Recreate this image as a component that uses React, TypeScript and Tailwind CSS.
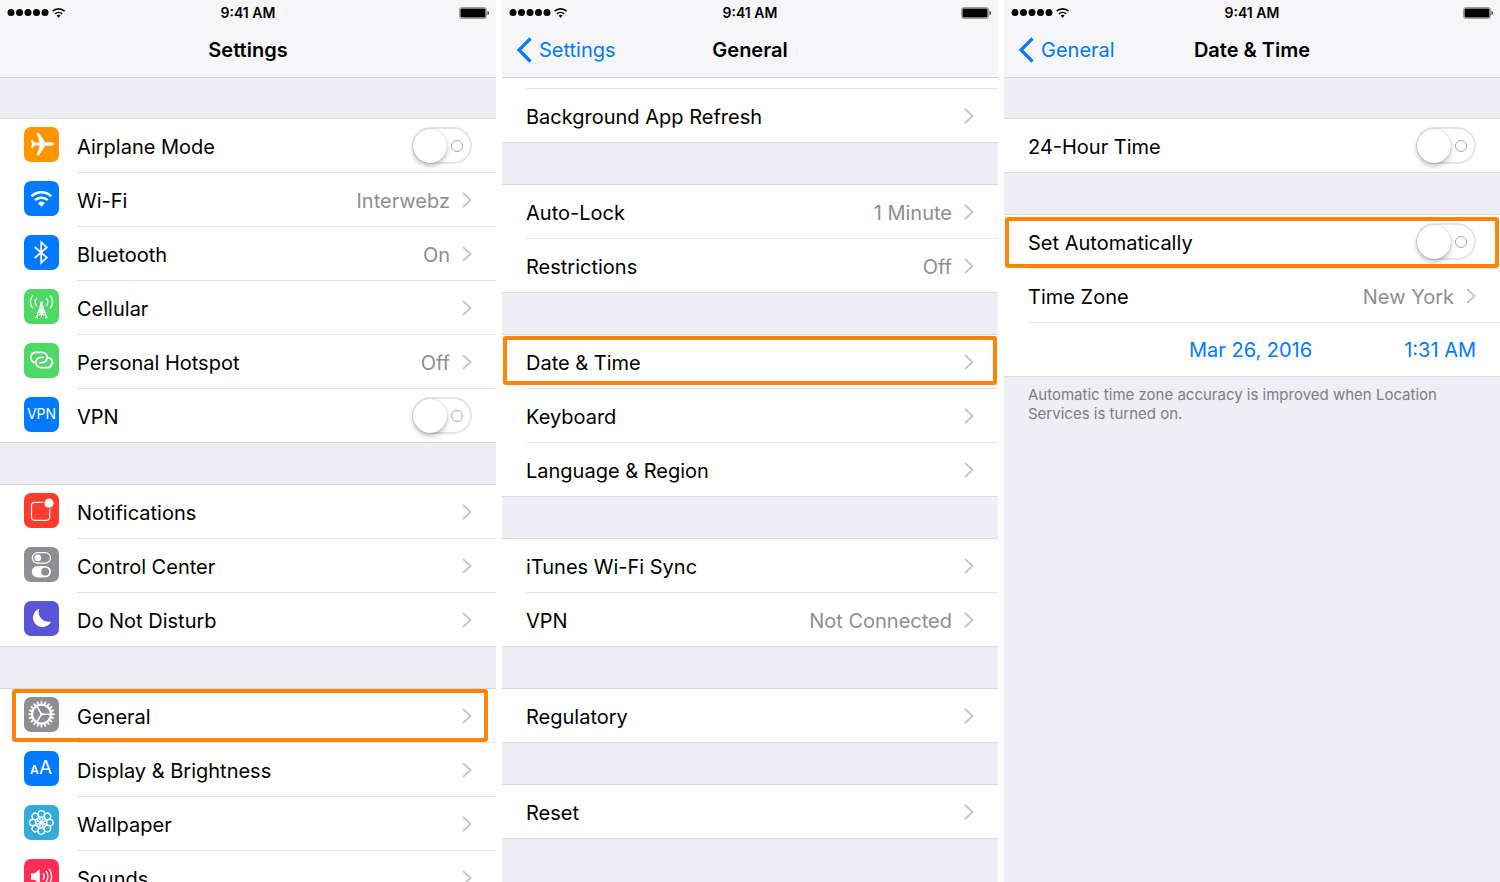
import { useId, type ReactNode } from 'react'

interface IconProps {
  color: string
  children: ReactNode
}

interface RowProps {
  label: string
  icon?: ReactNode
  value?: string
  highlight?: string
}

/* App icons, 35x35 */
function AppIcon({ color, children }: IconProps) {
  return (
    <svg viewBox="0 0 35 35" className="mb-1 mr-[18px] h-[35px] w-[35px] shrink-0" fill="none" stroke="#fff" aria-hidden="true">
      <rect width="35" height="35" rx="7" fill={color} stroke="none" />
      {children}
    </svg>
  )
}

const PETALS = [0, 45, 90, 135, 180, 225, 270, 315]
const TEETH = Array.from({ length: 20 }, (_, i) => i * 18)

const icons = {
  airplane: (
    <AppIcon color="#ff9500">
      <path
        d="M29.8 17c0 1.1-1.1 1.7-2.6 1.7H21.2L14.9 28.4h-2.3l3.2-9.7-5-.4L8.4 21H7l.9-4L7 13h1.4l2.4 2.7 5-.4-3.2-9.4h2.3l6.3 9.4h6c1.5 0 2.6.6 2.6 1.7Z"
        fill="#fff" stroke="none"
      />
    </AppIcon>
  ),
  wifi: (
    <AppIcon color="#007aff">
      <path d="M7.5 15.2a14.4 14.4 0 0 1 19.8 0" strokeWidth="2.6" />
      <path d="M11 19.2a9.4 9.4 0 0 1 12.8 0" strokeWidth="2.5" />
      <path d="M13.9 22.2a5.2 5.2 0 0 1 7 0l-3.5 3.6Z" fill="#fff" stroke="none" />
    </AppIcon>
  ),
  bluetooth: (
    <AppIcon color="#007aff">
      <path d="m10.8 12 12 10.6-5.6 5.2V7.2l5.6 5.2-12 10.6" strokeWidth="1.7" />
    </AppIcon>
  ),
  cellular: (
    <AppIcon color="#4cd964">
      <path d="M9 6.5a9.4 9.4 0 0 0 0 13M26 6.5a9.4 9.4 0 0 1 0 13M13 9a5.6 5.6 0 0 0-.2 8M22 9a5.6 5.6 0 0 1 .2 8" strokeWidth="1.5" opacity=".9" />
      <path d="m17.5 13.5-5.2 15.2M17.5 13.5l5.2 15.2M17.5 14v14.5M15.5 19.5h4M14.3 23h6.4M15.5 19.5l5.2 3.5 1.4 4-7.8-4M19.5 19.5 14.3 23l-1.4 4 7.8-4" strokeWidth="1.1" />
      <path d="M11 28.7h3M21 28.7h3" strokeWidth="1.2" />
      <circle cx="17.5" cy="14" r="1.5" fill="#fff" stroke="none" />
    </AppIcon>
  ),
  hotspot: (
    <AppIcon color="#4cd964">
      <g strokeWidth="1.9" strokeLinecap="round">
        <path d="M11.4 19.6a5.1 5.1 0 0 1 .9-10.2h5.8a5.1 5.1 0 0 1 0 10.2h-2.2" />
        <path d="M11.4 19.6a5.1 5.1 0 0 1 .9-10.2h5.8a5.1 5.1 0 0 1 0 10.2h-2.2" transform="rotate(180 17.5 17)" />
      </g>
    </AppIcon>
  ),
  vpn: (
    <AppIcon color="#007aff">
      <text x="17.5" y="22" textAnchor="middle" fontSize="14" fill="#fff" stroke="none">VPN</text>
    </AppIcon>
  ),
  notifications: (
    <AppIcon color="#ff3b30">
      <rect x="7.5" y="9.3" width="18.2" height="18" rx="3.2" strokeWidth="1.2" />
      <circle cx="25" cy="10.2" r="6" fill="#ff3b30" stroke="none" />
      <circle cx="25" cy="10.2" r="4.6" fill="#fff" stroke="none" />
    </AppIcon>
  ),
  control: (
    <AppIcon color="#8e8e93">
      <rect x="8.3" y="5.6" width="18.2" height="10.6" rx="5.3" strokeWidth="1.2" />
      <circle cx="13.8" cy="10.9" r="3.3" fill="#fff" stroke="none" />
      <rect x="7.8" y="19" width="19.2" height="11.4" rx="5.7" fill="#fff" stroke="none" />
      <circle cx="21.2" cy="24.7" r="3.9" fill="#8e8e93" stroke="none" />
    </AppIcon>
  ),
  moon: (
    <AppIcon color="#5856d6">
      <path d="M15.3 7.8a9.4 9.4 0 1 0 11.7 12.6A9.7 9.7 0 0 1 15.3 7.8Z" fill="#fff" stroke="none" />
    </AppIcon>
  ),
  gear: (
    <AppIcon color="#8e8e93">
      <circle cx="17.5" cy="17.2" r="9.4" strokeWidth="2" />
      {TEETH.map(a => (
        <path key={a} d="M16.6 7.2 17 4.2h1l.4 3Z" fill="#fff" strokeWidth=".5" transform={`rotate(${a} 17.5 17.2)`} />
      ))}
      <path d="M17.5 17.2h9.5M17.5 17.2l-4.8-8.3M17.5 17.2l-4.8 8.3" strokeWidth="1.5" />
      <circle cx="17.5" cy="17.2" r="1.4" fill="#fff" stroke="none" />
    </AppIcon>
  ),
  display: (
    <AppIcon color="#007aff">
      <text x="6" y="23" fontSize="12" fontWeight="600" fill="#fff" stroke="none">A</text>
      <text x="15" y="23" fontSize="19" fill="#fff" stroke="none">A</text>
    </AppIcon>
  ),
  wallpaper: (
    <AppIcon color="#34aadc">
      {PETALS.map(a => (
        <g key={a} transform={`rotate(${a} 17.3 17.5)`}>
          <circle cx="17.3" cy="8.9" r="3.2" strokeWidth="1.3" />
          <path d="M17.3 15.7c-1.7-1.6-1.9-2.4 0-3.8 1.9 1.4 1.7 2.2 0 3.8Z" strokeWidth="1" />
        </g>
      ))}
      <circle cx="17.3" cy="17.5" r="1.7" fill="#fff" stroke="none" />
    </AppIcon>
  ),
  sounds: (
    <AppIcon color="#ff2d55">
      <path d="M7 14.2h3.6l5.2-4v14.6l-5.2-4H7Z" fill="#fff" stroke="none" />
      <path d="M19 14.2a5.4 5.4 0 0 1 0 6.4M22 11.9a9 9 0 0 1 0 11M25 9.6a13 13 0 0 1 0 15.6" strokeWidth="1.4" />
    </AppIcon>
  ),
}

function Chevron() {
  return (
    <svg viewBox="0 0 10 16" className="ml-3 h-4 w-2.5 shrink-0" fill="none" stroke="#c7c7cc" strokeWidth="1.9" aria-hidden="true">
      <path d="m1 1 7.5 7L1 15" />
    </svg>
  )
}

function Highlight({ className }: { className: string }) {
  return <span className={`pointer-events-none absolute z-10 rounded-[3px] border-4 border-[#ff8408] ${className}`} />
}

/* White cell; the separator starts under the label, the last one runs the full width */
const cell = 'relative flex h-[54px] items-center bg-white pl-6 last:shadow-[inset_0_-1px_#dcdbe0]'
const inner = 'flex h-full min-w-0 grow items-center border-b border-[#e4e3e7] pr-6 group-last:border-transparent'

function LinkRow({ label, icon, value, highlight }: RowProps) {
  return (
    <li className={`group ${cell}`}>
      {icon}
      <a href="#" className={inner}>
        <span className="mt-0.5 grow truncate">{label}</span>
        {value && <span className="mt-0.5 text-[#8e8e93]">{value}</span>}
        <Chevron />
      </a>
      {highlight && <Highlight className={highlight} />}
    </li>
  )
}

function SwitchRow({ label, icon, highlight }: RowProps) {
  const id = useId()
  return (
    <li className={`group ${cell}`}>
      {icon}
      <div className={inner}>
        <label htmlFor={id} className="mt-0.5 grow truncate">{label}</label>
        <span className="relative flex h-[37px] w-[60px] shrink-0 items-center">
          <input
            id={id}
            type="checkbox"
            role="switch"
            className="peer absolute inset-0 appearance-none rounded-full border-2 border-[#e5e5e5] checked:border-[#4cd964] checked:bg-[#4cd964]"
          />
          <span className="pointer-events-none relative ml-px h-[34px] w-[34px] rounded-full bg-white shadow-[0_3px_5px_rgba(0,0,0,0.25),0_0_1px_rgba(0,0,0,0.25)] peer-checked:ml-[25px]" />
          <span className="pointer-events-none relative ml-1 h-3 w-3 rounded-full border border-[#a9a9a9] peer-checked:hidden" />
        </span>
      </div>
      {highlight && <Highlight className={highlight} />}
    </li>
  )
}

function Group({ children }: { children: ReactNode }) {
  return <ul className="mb-[41px] shrink-0 border-t border-[#d9d8dd]">{children}</ul>
}

function StatusBar() {
  return (
    <div className="grid h-[26px] grid-cols-3 items-center px-[7px] text-sm font-semibold">
      <svg viewBox="0 0 60 12" className="h-3 w-[60px]" aria-hidden="true">
        {[4, 12.5, 21, 29.5, 38].map(x => <circle key={x} cx={x} cy="5.6" r="3.5" />)}
        <g fill="none" stroke="#000" strokeWidth="1.6">
          <path d="M45.6 4.2a8.8 8.8 0 0 1 12 0" />
          <path d="M48 6.9a5.3 5.3 0 0 1 7.2 0" />
        </g>
        <path d="M49.6 8.6a3.1 3.1 0 0 1 4 0l-2 2.3Z" />
      </svg>
      <span className="text-center">9:41 AM</span>
      <svg viewBox="0 0 30 12" className="h-3 w-[30px] justify-self-end" aria-hidden="true">
        <rect x=".5" y=".5" width="27" height="11" rx="2" fill="none" stroke="#9a9a9a" />
        <rect x="1.5" y="1.5" width="25" height="9" rx="1" />
        <path d="M28.6 4v4c.9-.4 1.2-1.2 1.2-2s-.3-1.6-1.2-2Z" />
      </svg>
    </div>
  )
}

function Phone({ title, back, children }: { title: string; back?: string; children: ReactNode }) {
  return (
    <section className="flex h-full min-w-0 flex-col overflow-hidden bg-[#efeef4]">
      <header className="h-[78px] shrink-0 border-b border-[#d3d2d6] bg-[#f6f6f8]">
        <StatusBar />
        <nav className="grid h-12 grid-cols-[1fr_auto_1fr] items-center">
          {back ? (
            <a href="#" className="flex items-center gap-[7px] pl-3.5 text-[#007aff]">
              <svg viewBox="0 0 16 26" className="h-[26px] w-4" fill="none" stroke="currentColor" strokeWidth="3.2" aria-hidden="true">
                <path d="M14.5 1.5 3 13l11.5 11.5" />
              </svg>
              {back}
            </a>
          ) : <span />}
          <h1 className="font-semibold">{title}</h1>
        </nav>
      </header>
      <div className="flex grow flex-col overflow-y-auto [scrollbar-width:none]">{children}</div>
    </section>
  )
}

export default function App() {
  return (
    <main className="grid h-screen grid-cols-3 gap-1.5 bg-white font-[Inter,'Liberation_Sans',sans-serif] text-xl text-black">
      {/* Settings */}
      <Phone title="Settings">
        <div className="h-10 shrink-0" />
        <Group>
          <SwitchRow label="Airplane Mode" icon={icons.airplane} />
          <LinkRow label="Wi-Fi" icon={icons.wifi} value="Interwebz" />
          <LinkRow label="Bluetooth" icon={icons.bluetooth} value="On" />
          <LinkRow label="Cellular" icon={icons.cellular} />
          <LinkRow label="Personal Hotspot" icon={icons.hotspot} value="Off" />
          <SwitchRow label="VPN" icon={icons.vpn} />
        </Group>
        <Group>
          <LinkRow label="Notifications" icon={icons.notifications} />
          <LinkRow label="Control Center" icon={icons.control} />
          <LinkRow label="Do Not Disturb" icon={icons.moon} />
        </Group>
        <Group>
          <LinkRow label="General" icon={icons.gear} highlight="left-3 right-2 top-0 bottom-px" />
          <LinkRow label="Display & Brightness" icon={icons.display} />
          <LinkRow label="Wallpaper" icon={icons.wallpaper} />
          <LinkRow label="Sounds" icon={icons.sounds} />
        </Group>
      </Phone>

      {/* General */}
      <Phone title="General" back="Settings">
        <div className="h-[11px] shrink-0 bg-white pl-6">
          <div className="h-full border-b border-[#e4e3e7]" />
        </div>
        <ul className="mb-[41px] shrink-0">
          <LinkRow label="Background App Refresh" />
        </ul>
        <Group>
          <LinkRow label="Auto-Lock" value="1 Minute" />
          <LinkRow label="Restrictions" value="Off" />
        </Group>
        <Group>
          <LinkRow label="Date & Time" highlight="inset-x-px top-px bottom-1" />
          <LinkRow label="Keyboard" />
          <LinkRow label="Language & Region" />
        </Group>
        <Group>
          <LinkRow label="iTunes Wi-Fi Sync" />
          <LinkRow label="VPN" value="Not Connected" />
        </Group>
        <Group>
          <LinkRow label="Regulatory" />
        </Group>
        <Group>
          <LinkRow label="Reset" />
        </Group>
      </Phone>

      {/* Date & Time */}
      <Phone title="Date & Time" back="General">
        <div className="h-10 shrink-0" />
        <Group>
          <SwitchRow label="24-Hour Time" />
        </Group>
        <Group>
          <SwitchRow label="Set Automatically" highlight="inset-x-px top-0.5 bottom-px" />
          <LinkRow label="Time Zone" value="New York" />
          <li className={`${cell} justify-end gap-[92px] pr-6 text-[#007aff]`}>
            <button type="button">Mar 26, 2016</button>
            <button type="button">1:31 AM</button>
          </li>
        </Group>
        <p className="-mt-[33px] px-6 text-[15px] leading-[19px] text-[#7d7d82]">
          Automatic time zone accuracy is improved when Location Services is turned on.
        </p>
      </Phone>
    </main>
  )
}
